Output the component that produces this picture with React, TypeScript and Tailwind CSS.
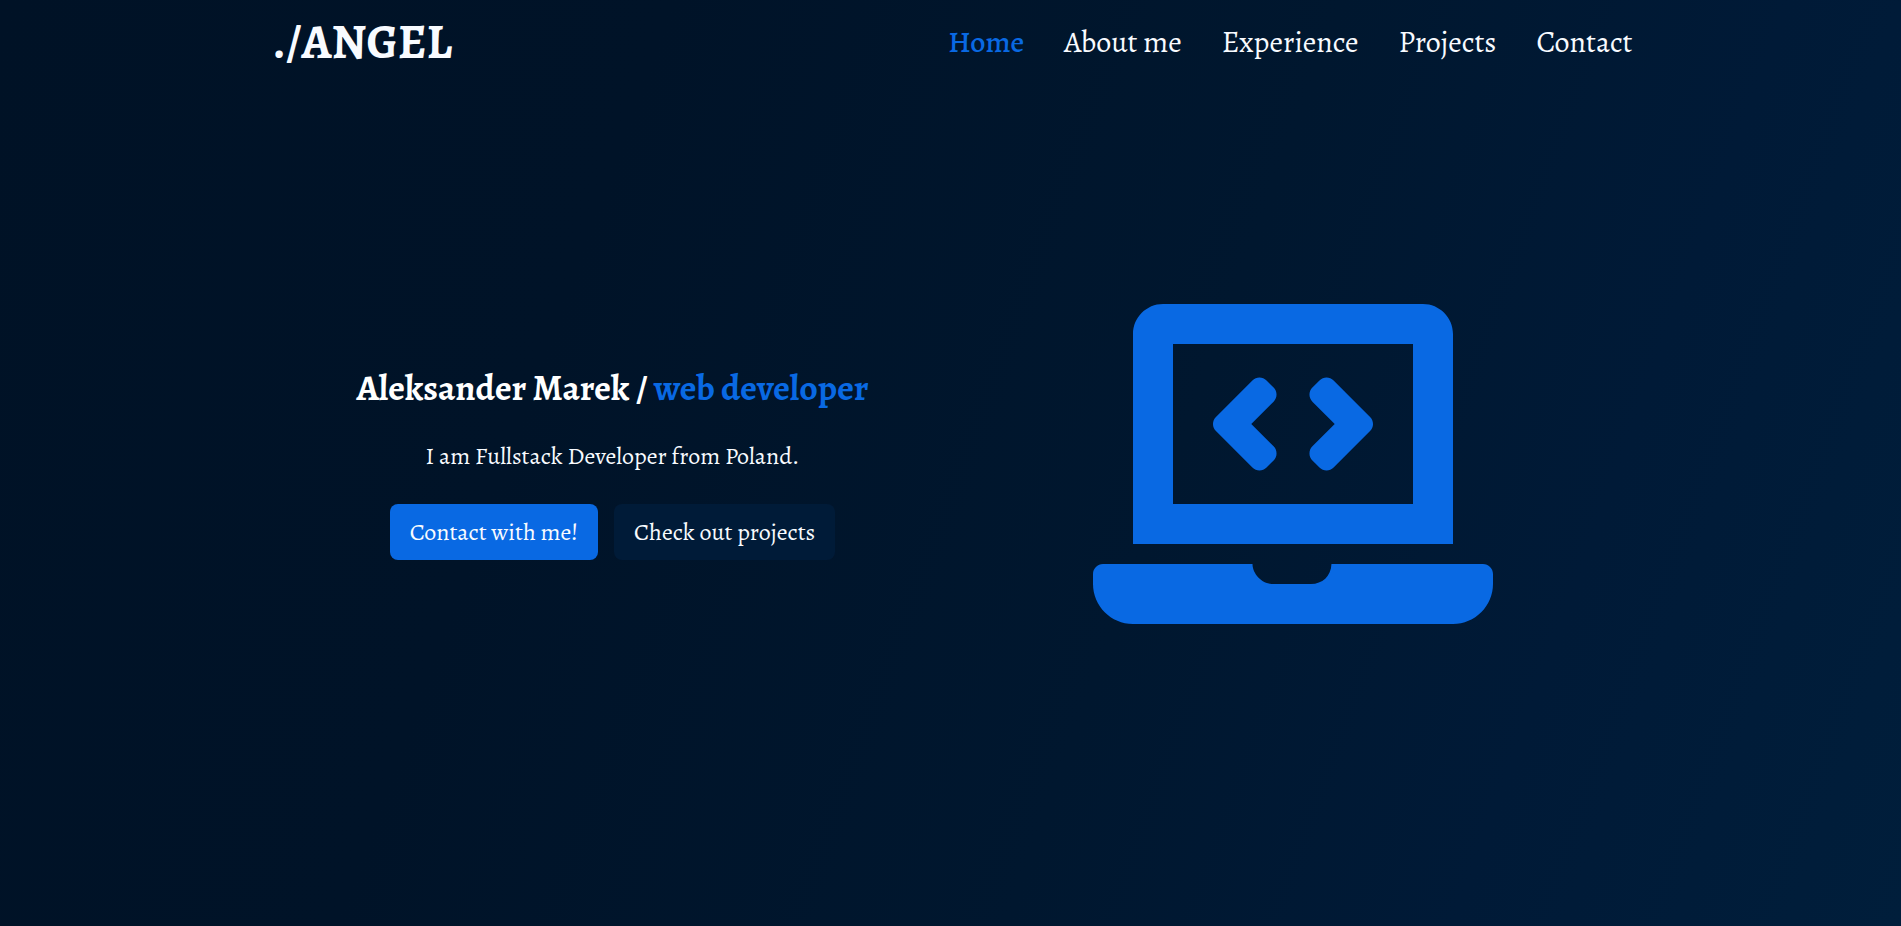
import { FaLaptopCode } from "react-icons/fa";

const links = [
  { label: "Home", href: "#home", active: true },
  { label: "About me", href: "#about", active: false },
  { label: "Experience", href: "#experience", active: false },
  { label: "Projects", href: "#projects", active: false },
  { label: "Contact", href: "#contact", active: false },
];

function Header() {
  return (
    <header className="mx-auto flex w-full max-w-[1364px] flex-wrap items-center justify-between gap-x-10 py-3 pl-1">
      <a href="#home" className="text-5xl leading-[60px] font-bold text-[#f8fbff]">
        ./ANGEL
      </a>
      <nav aria-label="Main">
        <ul className="flex flex-wrap gap-x-10">
          {links.map((link) => (
            <li key={link.label}>
              <a
                href={link.href}
                aria-current={link.active ? "page" : undefined}
                className={
                  link.active
                    ? "text-[30px] leading-[60px] font-medium text-[#0969e3]"
                    : "text-[30px] leading-[60px] text-[#f8fbff] hover:text-[#0969e3]"
                }
              >
                {link.label}
              </a>
            </li>
          ))}
        </ul>
      </nav>
    </header>
  );
}

function Hero() {
  return (
    <main
      id="home"
      className="mx-auto grid w-full max-w-[1364px] flex-1 grid-cols-1 items-center pb-[82px] pl-1 md:grid-cols-2"
    >
      <section className="flex flex-col items-center pb-1 text-center text-2xl text-[#f8fbff]">
        <h1 className="text-4xl leading-[48px] font-bold text-white">
          Aleksander Marek / <span className="text-[#0969e3]">web developer</span>
        </h1>
        <p className="mt-6 leading-10">I am Fullstack Developer from Poland.</p>
        <div className="mt-7 flex flex-wrap justify-center gap-4">
          <a href="#contact" className="rounded-lg bg-[#0969e3] px-5 py-3">
            Contact with me!
          </a>
          <a href="#projects" className="rounded-lg bg-[#001b38] px-5 py-3">
            Check out projects
          </a>
        </div>
      </section>
      <div className="flex justify-center">
        <FaLaptopCode aria-hidden="true" className="h-auto w-[400px] max-w-full text-[#0969e3]" />
      </div>
    </main>
  );
}

export default function App() {
  return (
    <div className="flex min-h-screen flex-col bg-linear-[110deg,#001226_0%,#001328_30%,#00172f_60%,#001a37_80%,#001e3b_100%] font-['Alegreya','Liberation_Serif',serif]">
      <Header />
      <Hero />
    </div>
  );
}
